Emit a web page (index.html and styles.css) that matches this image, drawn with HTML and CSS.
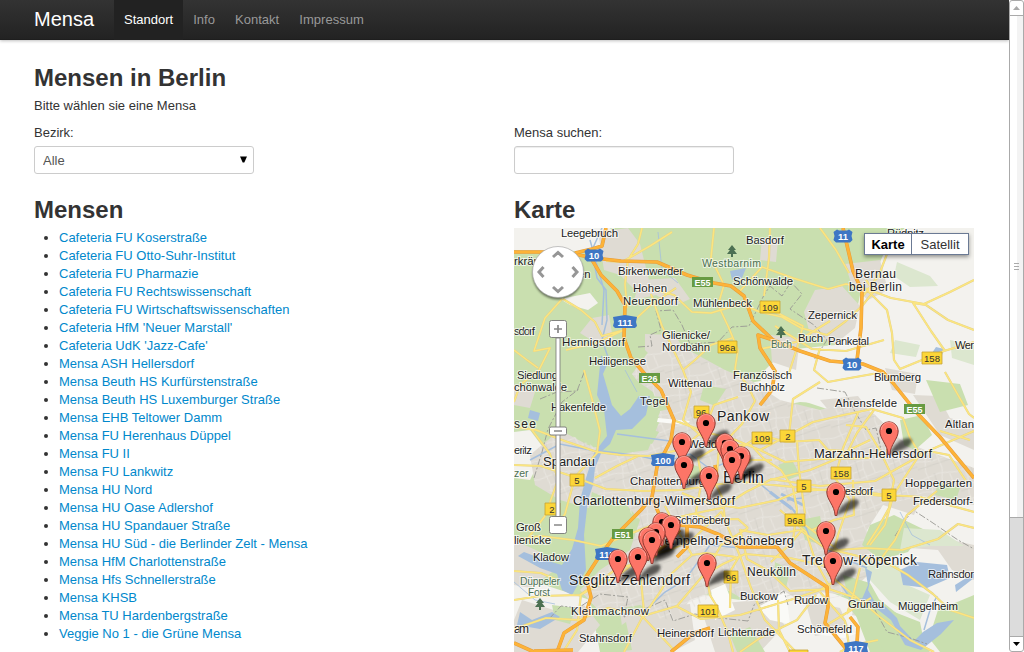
FILE: index.html
```html
<!DOCTYPE html>
<html lang="de">
<head>
<meta charset="utf-8">
<title>Mensa</title>
<link rel="stylesheet" href="styles.css">
</head>
<body>
<div class="page">
<nav class="navbar">
  <a class="brand">Mensa</a>
  <a class="nav-item active">Standort</a><a class="nav-item">Info</a><a class="nav-item">Kontakt</a><a class="nav-item">Impressum</a>
</nav>
<main class="container">
  <h1>Mensen in Berlin</h1>
  <p class="intro">Bitte wählen sie eine Mensa</p>
  <div class="row filters">
    <div class="col"><label for="bezirk">Bezirk:</label>
      <div class="select-wrap"><select id="bezirk" class="field"><option>Alle</option></select><svg class="caret" width="7" height="7"><path d="M0 0.5H7L4.3 6.5H2.7Z"/></svg></div></div>
    <div class="col"><label for="suche">Mensa suchen:</label><input id="suche" class="field" type="text"></div>
  </div>
  <div class="row">
    <section class="col">
      <h2>Mensen</h2>
      <ul class="list">
        <li><a>Cafeteria FU Koserstraße</a></li>
        <li><a>Cafeteria FU Otto-Suhr-Institut</a></li>
        <li><a>Cafeteria FU Pharmazie</a></li>
        <li><a>Cafeteria FU Rechtswissenschaft</a></li>
        <li><a>Cafeteria FU Wirtschaftswissenschaften</a></li>
        <li><a>Cafeteria HfM 'Neuer Marstall'</a></li>
        <li><a>Cafeteria UdK 'Jazz-Cafe'</a></li>
        <li><a>Mensa ASH Hellersdorf</a></li>
        <li><a>Mensa Beuth HS Kurfürstenstraße</a></li>
        <li><a>Mensa Beuth HS Luxemburger Straße</a></li>
        <li><a>Mensa EHB Teltower Damm</a></li>
        <li><a>Mensa FU Herenhaus Düppel</a></li>
        <li><a>Mensa FU II</a></li>
        <li><a>Mensa FU Lankwitz</a></li>
        <li><a>Mensa HU Nord</a></li>
        <li><a>Mensa HU Oase Adlershof</a></li>
        <li><a>Mensa HU Spandauer Straße</a></li>
        <li><a>Mensa HU Süd - die Berlinder Zelt - Mensa</a></li>
        <li><a>Mensa HfM Charlottenstraße</a></li>
        <li><a>Mensa Hfs Schnellerstraße</a></li>
        <li><a>Mensa KHSB</a></li>
        <li><a>Mensa TU Hardenbergstraße</a></li>
        <li><a>Veggie No 1 - die Grüne Mensa</a></li>
      </ul>
    </section>
    <section class="col">
      <h2>Karte</h2>
      <div class="map">
<svg class="map-canvas" width="460" height="424" viewBox="514 228 460 424">
  <defs>
    <pattern id="streets" width="37" height="31" patternUnits="userSpaceOnUse" patternTransform="rotate(-14)">
      <path d="M0 7L20 4L37 7M0 19L15 22L37 19M7 0L10 15L7 31M24 0L21 12L24 31M10 15L22 13M30 7L32 19" fill="none" stroke="#e8e5df" stroke-width="1"/>
      <path d="M0 27L37 24M15 3L16 22" fill="none" stroke="#cbc8c1" stroke-width=".5"/>
    </pattern>
    <filter id="blur" x="-30%" y="-30%" width="160%" height="160%"><feGaussianBlur stdDeviation="1.5"/></filter>
    <filter id="soft" x="-30%" y="-30%" width="160%" height="160%"><feGaussianBlur stdDeviation="1.3"/></filter>
    <g id="shadow"><path d="M0 24C3 16 8 11 15 8C22 6 25 9 21 14C17 19 6 20 0 24Z" fill="#000" opacity=".6" filter="url(#blur)"/></g>
    <g id="pin"><path d="M-.9 23.5C-1.5 13-9.2 8-9.2 0A9.2 9.2 0 1 1 9.2 0C9.2 8 1.5 13 .9 23.5Z" fill="#fd7567" stroke="#8e3931" stroke-width="1"/><path d="M-7.7-1A7.7 7.7 0 0 1 7.7-1" fill="none" stroke="#ffa79d" stroke-width=".8"/><circle r="3.1" fill="#000"/></g>
    <g id="tree" fill="#4c7052"><path d="M0-6L4-1H2L5 3H-5L-2-1H-4Z"/><path d="M-1 2H1V6H-1Z"/></g>
    <path id="shield" d="M-6-6.500L-4-5.500H4L6-6.500L9.500-4L8.500 0L9.500 4L7 6.500H-7L-9.500 4L-8.500 0L-9.500-4Z"/>
  </defs>
  <rect x="514" y="228" width="460" height="424" fill="#c9dfaf"/>

  <!-- open land -->
  <g fill="#f3f2ee">
    <path d="M514 228H610L622 242L612 256L594 252L575 251L514 250ZM560 299L590 293L598 303L588 310L570 305Z"/>
    <path d="M905 228H974V652H930L905 620L880 600L860 590L850 500L880 450L860 420L800 400L770 410L755 395L765 370L785 350L835 345L855 320L862 285L880 262L890 240Z"/>
    <path d="M514 432L530 430L545 450L530 480L514 478ZM514 575L560 590L590 600L600 652H514ZM670 590L740 600L800 580L850 600L870 652H640L650 620ZM642 610L670 615L668 645L642 640Z"/>
    <path d="M750 383L790 375L830 385L850 405L800 402L760 410Z"/>
  </g>
  <!-- built-up areas -->
  <g fill="#dfdbd3">
    <path d="M632 374L650 350L670 340L692 352L725 370L750 380L780 400L820 410L850 402L874 414L901 440L925 450L974 468L974 505L922 496L914 515L883 505L867 530L874 570L846 595L820 592L806 604L782 590L760 609L724 588L690 600L674 620L640 605L600 612L580 590L600 570L630 550L640 520L622 500L595 510L560 500L535 485L530 455L560 430L586 444L612 455L648 450L660 420L648 395Z"/>
    <path d="M598 232L628 228L640 244L650 284L636 291L620 275L604 270ZM640 280L675 278L690 299L674 306L656 295L634 300ZM592 318L609 315L613 340L599 345L580 333ZM645 334L675 335L690 360L660 365L645 350ZM514 385L535 392L530 408L514 405Z"/>
    <path d="M815 290L842 286L860 306L855 328L835 344L810 334L804 312ZM845 264L880 260L888 290L868 300L852 286ZM762 238L778 240L776 262L760 260ZM770 335L800 338L796 370L772 362Z"/>
    <path d="M514 540L540 552L555 570L530 588L514 585ZM522 600L560 612L584 605L600 625L578 652H514V620ZM620 610L690 604L695 640L672 652H625ZM700 605L760 600L785 625L760 652H715ZM805 600L840 608L850 630L815 636ZM855 600L880 602L875 620L852 615ZM905 530L974 545V580L952 570L938 550L910 548Z"/>
    <path d="M885 368L918 374L915 394L892 390ZM913 395L938 396L950 418L974 425V450L940 435ZM820 400L858 396L870 412L835 418Z"/>
  </g>
  <path d="M632 374L650 350L670 340L692 352L725 370L750 380L780 400L820 410L850 402L874 414L901 440L925 450L974 468V505L922 496L883 505L867 530L874 570L846 595L806 604L760 609L724 588L674 620L600 612L580 590L630 550L640 520L595 510L535 485L530 455L560 430L612 455L648 450L660 420L648 395Z" fill="url(#streets)"/>
  <!-- woods and parks -->
  <g fill="#c9dfaf">
    <path d="M585 400L628 375L653 392L660 412L651 434L620 440L604 430ZM592 492L622 505L638 520L620 555L593 562L584 536ZM646 396L665 397L669 409L652 413ZM704 385L726 389L715 406L700 400ZM778 465L792 460L800 475L788 480ZM800 520L820 516L826 546L805 540Z"/>
    <path d="M843 575L870 583L884 608L920 622L926 652H886L851 610ZM870 525L894 515L925 530L908 552L880 560L862 545ZM938 610L974 595V652H940L929 638ZM775 562L790 570L786 588L774 575ZM900 420L922 415L932 435L915 450L904 445ZM640 426L659 432L652 444L636 439ZM690 464L703 468L694 480L680 476Z"/>
    <path d="M926 380L960 384L968 405L940 412ZM938 482L960 488L956 500L935 495ZM615 630L626 622L632 650L613 652ZM552 605L576 608L570 624L555 620ZM730 635L750 627L765 652H737Z"/>
  </g>
  <g fill="#dce7cf"><path d="M858 560L898 564L905 584L930 595L920 620L890 602L870 580ZM904 528L940 530L964 546L930 546L900 550ZM897 262L930 276L938 286L910 287L894 276ZM895 340L920 345L916 357L890 353ZM950 340L974 345V365L952 358Z"/></g>
  <g fill="#fafaf7"><path d="M658 418L690 421L686 425L657 422ZM711 590L725 584L735 610L715 620ZM758 607L786 592L790 624L770 620ZM808 628L858 633L844 638L807 633Z"/></g>

  <!-- water -->
  <g fill="#a5bfdd">
    <path d="M601 355L607 365L603 374L608 391L612 405L621 416L630 409L639 396L650 396L646 415L632 429L616 430L610 444L602 451L595 468L593 485L588 500L584 535L586 570L572 595L562 590L557 574L540 568L518 556L524 552L545 560L562 565L572 549L578 528L580 500L586 478L594 453L607 436L604 410L597 395Z"/>
    <path d="M900 570L917 562L947 565L950 578L927 588L903 585Z"/>
    <path d="M865 568L872 572L868 590L876 604L886 607L897 618L900 626L914 641L923 632L937 623L954 620L941 634L921 650L905 645L891 620L877 609L862 599L868 585Z"/>
    <path d="M520 612L532 620L552 612L560 617L540 629L517 625ZM598 402L611 404L610 412L597 410ZM936 347L944 349L942 355L932 353ZM730 271L746 268L742 278L732 280ZM530 410L540 413L538 421L528 418ZM955 585L974 573V578L956 592Z"/>
  </g>
  <g fill="none" stroke="#a5bfdd" stroke-width="1.500">
    <path d="M602 228L592 250L597 278L606 290L607 320L602 340L609 360M590 240L604 290L602 325M600 452L560 444L530 460M602 451L640 456L665 462L690 454L710 469L730 461L749 475L770 492L790 506L803 520L810 538L838 556L867 568M617 434L670 441M787 500L802 498M790 506L806 528M640 616L665 592L685 580L710 545L740 548M924 630L930 610L937 596M870 600L850 598L838 580"/>
    <path d="M658 232L662 270L678 283M625 370L637 392M514 582L535 600L555 604M900 512L912 535L930 545" stroke-width=".8"/>
    <path d="M770 492L792 509M781 494L803 505" stroke-width="3"/>
  </g>

  <!-- city limits and railways -->
  <g fill="none" stroke="#999993" stroke-width=".9" stroke-dasharray="7 2 2 2"><path d="M638 347L652 346L650 335L661 330L656 311L673 310L682 325L690 344L718 342L732 327L749 326L764 295L770 286L782 296L791 282L802 294L790 309L814 325L827 340L814 360M817 388L845 392L854 410L866 430L876 428L881 450M534 478L542 452L548 429L562 402L579 389M540 399L557 392L577 391L585 370M549 619L561 606L578 608L600 594L628 597L624 617L647 608L665 600L673 621L695 614L710 617L748 621L754 605L770 600L784 591L788 605M895 536L904 522L913 510L930 521L958 540L974 549M875 610L887 632L910 638L927 644"/></g>

  <!-- main roads -->
  <g fill="none" stroke-linejoin="round">
    <g stroke="#e2d08a" stroke-width="2.200">
      <path id="r1" d="M563 299L581 310L595 322L602 336L624 330L640 315L652 304L676 288M562 299L545 318L534 351L550 348L539 370L520 385L514 402M514 350L527 360L538 368M642 228L638 244L628 260L625 284L627 308M672 232L650 246L622 262L606 261M714 228L711 258L724 285L718 305L728 326L738 350L735 369L748 386L755 401L742 424L719 448M654 290L674 295L692 312L711 313L741 304L760 312L782 317L801 328L827 335L846 321L862 306L874 291L866 280M651 294L662 326L683 370L691 392L683 420L706 440L719 448M683 370L695 360L711 345L732 338M624 330L596 343L566 350M739 292L762 267L793 278L828 289L846 284L867 289L891 298L924 304L950 292L974 280M770 228L769 258L764 296M820 228L836 250L849 273M890 246L879 275L863 296M867 290L887 310L892 333L894 360L900 369L944 351L974 342M945 351L931 331L913 303L926 305L948 320L974 330M775 326L812 349L846 351L884 340M764 306L803 326L797 348L789 373M820 348L814 370L828 382L850 378L884 372M760 349L796 342L830 321"/>
      <path id="r2" d="M514 427L536 430L562 440L597 452L621 455L648 456L680 450L704 430L714 405L738 397M514 465L541 466L574 477L606 489L644 491L680 490L714 485L742 481M532 430L550 454L558 480L545 516L528 538M598 452L575 477L565 514L554 530M584 370L592 399L600 431L597 453M595 478L617 466L638 456M673 420L709 433L733 439L760 450L785 462L820 459L870 458M514 540L540 536L573 540L601 546L632 533L663 521L692 514L721 508L746 492L770 480L810 470L846 455L857 433L874 410M682 493L707 503L739 508L778 500L800 491L836 489L880 494L920 497L974 512M696 512L702 479L698 458L719 446M725 522L723 499L716 485L719 448M725 445L751 445L764 459L781 470L793 488L797 510L793 540M739 472L751 460L772 460M741 448L760 435L787 442L819 440L828 450L847 451L870 440M742 482L794 487L853 493L883 496M770 479L820 486L875 481L930 450L974 431M760 450L789 435L813 422L839 416L872 409L903 418L910 438L920 454L890 500M789 435L793 399L820 382M797 440L799 470L805 514M858 413L843 448L835 478L850 500L838 535L830 567M846 425L866 427L879 449L894 480L889 508L878 528L867 545M740 530L768 535L800 530L825 548L858 556L884 561L908 575L933 594L950 610L974 618M800 521L838 550L866 548L902 550L938 539L958 524L974 528M870 545L885 525L892 500M945 372L958 395L969 414L974 418M928 451L949 455L966 481M940 431L970 440"/>
      <path id="r3" d="M514 600L540 596L580 595L620 574L641 558L670 550L692 540L721 512M581 594L577 630L563 652M580 595L615 570L657 556M514 629L546 618L579 620L608 608L643 616L677 606L706 572L721 545L748 528M643 617L660 592L670 575L692 555L706 553L736 557M705 568L710 595L716 605L728 633L733 652M706 574L723 564L745 554L790 558L830 567M643 616L624 652M643 617L674 650M644 612L641 580L632 561M676 606L701 619L740 615L790 600L820 590L835 581M692 555L675 526L665 506M721 511L740 556L751 588L765 620L796 652M740 529L747 559L767 570L790 591L829 589L856 598M778 600L779 630L790 652M816 595L797 620L760 638L740 652M830 588L815 560L806 532L780 510M827 573L860 600L880 617L910 640L934 652M820 592L845 621L850 652M825 626L871 598M860 568L854 592L847 614M880 560L895 540L907 515L937 491M812 530L834 520L854 515L853 480M771 562L790 544L803 529M694 514L711 520L738 519L748 528M514 571L541 573L555 579M840 652L853 645L878 640M730 608L731 570L740 555"/>
    </g>
    <g stroke="#fbe57f" stroke-width="1.500"><use href="#r1"/><use href="#r2"/><use href="#r3"/></g>
  </g>

  <!-- motorways -->
  <g fill="none" stroke-linejoin="round">
    <path class="motorway-edge" d="M514 252H564L594 258L621 261L657 262L687 275L714 283L731 286L744 296L753 321L773 340L800 351L830 361L863 364L883 372L893 383L917 413L940 437L974 478M591 258L601 275L617 291L625 305L624 338L631 358L644 373L661 390L674 420L671 440L657 467L652 497L641 510L614 537L597 560L586 577L591 597L584 620L564 633L557 652"/>
    <path class="motorway" d="M514 252H564L594 258L621 261L657 262L687 275L714 283L731 286L744 296L753 321L773 340L800 351L830 361L863 364L883 372L893 383L917 413L940 437L974 478M591 258L601 275L617 291L625 305L624 338L631 358L644 373L661 390L674 420L671 440L657 467L652 497L641 510L614 537L597 560L586 577L591 597L584 620L564 633L557 652"/>
    <path class="motorway-edge" d="M575 253L592 249L602 246L606 228M652 497L659 514L678 525L700 527L720 535L740 547L777 547L790 563L827 587L828 607L825 623L847 650M843 228L853 271L862 291L861 328L857 360M773 340L758 335L760 348L775 371L772 390L760 405M514 643L534 652M534 651L573 650M710 628L694 633L671 652M850 617L858 627L857 643M687 527L687 547L677 557M715 465L717 477M680 530L665 546L655 553"/>
    <path class="motorway" d="M575 253L592 249L602 246L606 228M652 497L659 514L678 525L700 527L720 535L740 547L777 547L790 563L827 587L828 607L825 623L847 650M843 228L853 271L862 291L861 328L857 360M773 340L758 335L760 348L775 371L772 390L760 405M514 643L534 652M534 651L573 650M710 628L694 633L671 652M850 617L858 627L857 643M687 527L687 547L677 557M715 465L717 477M680 530L665 546L655 553"/>
  </g>

  <!-- place names -->
  <g class="labels">
    <text x="561" y="237" textLength="57">Leegebruch</text><text x="746" y="244" textLength="38">Basdorf</text><text x="887" y="237" textLength="37">Rüdnitz</text>
    <text x="514" y="265">rkrän</text><text x="578" y="278">en</text><text x="618" y="275" textLength="65">Birkenwerder</text>
    <text x="702" y="267" textLength="59" class="park">Westbarnim</text><text x="733" y="285" textLength="60">Schönwalde</text>
    <text x="633" y="292" textLength="34">Hohen</text><text x="623" y="305" textLength="55">Neuendorf</text><text x="693" y="307" textLength="59">Mühlenbeck</text>
    <text x="855" y="278" textLength="41" class="mid">Bernau</text><text x="849" y="291" textLength="53" class="mid">bei Berlin</text>
    <text x="808" y="319" textLength="49">Zepernick</text><text x="798" y="342" textLength="25">Buch</text><text x="828" y="345" textLength="41">Panketal</text><text x="771" y="348" textLength="21" class="park">Buch</text>
    <text x="514" y="335" textLength="21">sdorf</text><text x="562" y="346" textLength="63">Hennigsdorf</text><text x="589" y="365" textLength="57">Heiligensee</text>
    <text x="662" y="339" textLength="48">Glienicke/</text><text x="662" y="351" textLength="48">Nordbahn</text><text x="955" y="349" textLength="19">Wer</text>
    <text x="517" y="379" textLength="41">Siedlung</text><text x="514" y="391" textLength="53">chönwalde</text><text x="668" y="387" textLength="44">Wittenau</text><text x="733" y="379" textLength="59">Französisch</text><text x="740" y="391" textLength="45">Buchholz</text><text x="874" y="381" textLength="47">Blumberg</text>
    <text x="640" y="405" textLength="28">Tegel</text><text x="551" y="411" textLength="55">Hakenfelde</text><text x="835" y="407" textLength="62">Ahrensfelde</text><text x="945" y="428" textLength="29">Altlan</text>
    <text x="717" y="421" textLength="52" class="big wide">Pankow</text><text x="514" y="428" textLength="22" class="mid">see</text><text x="514" y="454" textLength="18">eritz</text><text x="543" y="466" textLength="52" class="big">Spandau</text>
    <text x="688" y="448" textLength="44">Wedding</text><text x="630" y="485" textLength="75">Charlottenburg</text><text x="573" y="505" textLength="162" class="big">Charlottenburg-Wilmersdorf</text><text x="723" y="483" textLength="41" class="city">Berlin</text>
    <text x="814" y="458" textLength="118" class="big">Marzahn-Hellersdorf</text><text x="836" y="495" textLength="37">Biesdorf</text><text x="905" y="487" textLength="67">Hoppegarten</text><text x="913" y="505" textLength="60">Fredersdorf-</text>
    <text x="514" y="477" class="park">zer</text><text x="516" y="531" textLength="25">Groß</text><text x="514" y="544" textLength="37">lienicke</text><text x="533" y="561" textLength="36">Kladow</text><text x="520" y="585" textLength="40" class="park">Düppeler</text><text x="528" y="596" textLength="22" class="park">Forst</text>
    <text x="674" y="524" textLength="56">Schöneberg</text><text x="658" y="545" textLength="136" class="big">Tempelhof-Schöneberg</text><text x="569" y="585" textLength="121" class="big wide">Steglitz-Zehlendorf</text><text x="747" y="576" textLength="49" class="mid">Neukölln</text>
    <text x="571" y="615" textLength="78">Kleinmachnow</text><text x="514" y="633" textLength="15" class="mid">am</text><text x="579" y="642" textLength="53">Stahnsdorf</text><text x="657" y="637" textLength="57">Heinersdorf</text><text x="718" y="636" textLength="57">Lichtenrade</text><text x="740" y="600" textLength="38">Buckow</text><text x="794" y="604" textLength="34">Rudow</text><text x="797" y="633" textLength="55">Schönefeld</text><text x="848" y="608" textLength="36">Grünau</text><text x="898" y="610" textLength="60">Müggelheim</text><text x="928" y="578" textLength="46">Rahnsdor</text><text x="802" y="565" textLength="115" class="big wide">Treptow-Köpenick</text>
  </g>
  <g><use href="#tree" x="732" y="251"/><use href="#tree" x="781" y="332"/><use href="#tree" x="540" y="604"/></g>

  <!-- road numbers -->
  <g class="auto">
    <use href="#shield" x="594" y="255"/><use href="#shield" x="843" y="236"/><use href="#shield" x="852" y="364"/>
    <path d="M613 317L625 315L637 317L636 322L637 326L635 328H615L613 326L614 322ZM651 455L663 453L675 455L674 460L675 464L673 466H653L651 464L652 460ZM595 549L607 547L619 549L618 554L619 558L617 560H597L595 558L596 554ZM844 643L856 641L868 643L867 648L868 652H844L845 648Z"/>
    <text x="594" y="259">10</text><text x="843" y="240">11</text><text x="852" y="368">10</text><text x="625" y="326">111</text><text x="663" y="464">100</text><text x="607" y="558">115</text><text x="856" y="651.500">117</text>
  </g>
  <g class="euro">
    <path d="M692 277H713V287H692ZM639 373H660V383H639ZM904 404H925V414H904ZM612 529H633V539H612Z"/>
    <text x="702.500" y="285.500">E55</text><text x="649.500" y="381.500">E26</text><text x="914.500" y="412.500">E55</text><text x="622.500" y="537.500">E51</text>
  </g>
  <g class="bund">
    <path d="M760 301H780V313H760ZM718 341H737V353H718ZM922 352H942V364H922ZM694 406H709V418H694ZM752 432H772V444H752ZM780 430H795V442H780ZM570 474H584V486H570ZM831 467H851V479H831ZM797 480H811V492H797ZM882 489H896V501H882ZM785 514H805V526H785ZM545 503H560V515H545ZM724 571H738V583H724ZM698 605H718V617H698ZM789 650H808V662H789Z"/>
    <text x="770" y="311">109</text><text x="727.500" y="351">96a</text><text x="932" y="362">158</text><text x="701" y="416">96</text><text x="762" y="442">109</text><text x="788" y="440">2</text><text x="577" y="484">5</text><text x="841" y="477">158</text><text x="804" y="490">5</text><text x="889" y="499">5</text><text x="795" y="524">96a</text><text x="552" y="513">2</text><text x="731" y="581">96</text><text x="708" y="615">101</text>
  </g>

  <!-- canteens -->
  <g><use href="#shadow" x="706" y="423"/><use href="#shadow" x="682" y="442"/><use href="#shadow" x="684" y="465"/><use href="#shadow" x="709" y="476"/><use href="#shadow" x="725" y="443"/><use href="#shadow" x="730" y="449"/><use href="#shadow" x="741" y="456"/><use href="#shadow" x="732" y="460"/><use href="#shadow" x="889" y="431"/><use href="#shadow" x="836" y="492"/><use href="#shadow" x="826" y="531"/><use href="#shadow" x="833" y="561"/><use href="#shadow" x="662" y="522"/><use href="#shadow" x="671" y="525"/><use href="#shadow" x="656" y="533"/><use href="#shadow" x="649" y="537"/><use href="#shadow" x="652" y="540"/><use href="#shadow" x="618" y="559"/><use href="#shadow" x="638" y="557"/><use href="#shadow" x="707" y="563"/></g>
  <g><use href="#pin" x="706" y="423"/><use href="#pin" x="889" y="431"/><use href="#pin" x="682" y="442"/><use href="#pin" x="725" y="443"/><use href="#pin" x="730" y="449"/><use href="#pin" x="741" y="456"/><use href="#pin" x="732" y="460"/><use href="#pin" x="684" y="465"/><use href="#pin" x="709" y="476"/><use href="#pin" x="836" y="492"/><use href="#pin" x="662" y="522"/><use href="#pin" x="671" y="525"/><use href="#pin" x="826" y="531"/><use href="#pin" x="656" y="532"/><use href="#pin" x="648" y="537"/><use href="#pin" x="652" y="540"/><use href="#pin" x="638" y="557"/><use href="#pin" x="618" y="559"/><use href="#pin" x="833" y="561"/><use href="#pin" x="707" y="563"/></g>

  <!-- pan and zoom controls -->
  <circle cx="558" cy="274" r="25.500" fill="#000" opacity=".5" filter="url(#soft)"/>
  <circle cx="558" cy="272" r="25.500" fill="#fff" stroke="#aaa" stroke-width=".7"/>
  <path d="M553 257L558 252.500L563 257M553 287L558 291.500L563 287M543.500 267L539 272L543.500 277M572.500 267L577 272L572.500 277" fill="none" stroke="#969696" stroke-width="3"/>
  <rect x="556" y="338" width="4" height="179" fill="#fff" stroke="#777" stroke-width=".8"/>
  <g fill="#fff" stroke="#777" stroke-width=".9"><rect x="549.500" y="320.500" width="17" height="17" rx="2"/><rect x="549.500" y="516.500" width="17" height="17" rx="2"/><rect x="549.500" y="427" width="17" height="8" rx="1.500"/></g>
  <path d="M554 329H562M558 325V333M554 525H562M554 431H562" stroke="#888" stroke-width="1.700"/>
</svg>
        <div class="map-type"><b>Karte</b><span>Satellit</span></div>
      </div>
    </section>
  </div>
</main>
</div>
<div class="scrollbar"><div class="sb-button"><svg width="7" height="4"><path d="M3.500 0L7 4H0Z" fill="#aaa"/></svg></div><div class="sb-thumb"><i></i><i></i><i></i></div><div class="sb-track"></div><div class="sb-button"><svg width="7" height="4"><path d="M0 0H7L3.500 4Z"/></svg></div></div>
</body>
</html>
```

FILE: styles.css
```css
* { box-sizing: border-box; }
body { margin: 0; height: 652px; overflow: hidden; display: flex; background: #fff; color: #333; font: 13px/18px "Liberation Sans", Arial, sans-serif; }
.page { flex: 1; height: 652px; overflow: hidden; }
.navbar { height: 40px; padding-left: 34px; display: flex; background: linear-gradient(#333, #222); box-shadow: 0 1px 3px rgba(0,0,0,.25), inset 0 -1px 0 rgba(0,0,0,.1); color: #999; }
.brand { width: 80px; font-size: 20px; line-height: 20px; padding-top: 9px; color: #fff; }
.nav-item { padding: 10px; line-height: 19px; height: 40px; letter-spacing: .03px; }
.nav-item.active { background: #222; color: #fff; letter-spacing: 0; }
.container { padding: 20px 0 0 34px; }
h1, h2 { margin: 0; font-size: 24px; line-height: 36px; font-weight: bold; }
h2 { line-height: 37px; }
.intro { margin: 1px 0 9px; }
.row { display: flex; gap: 20px; }
.col { width: 460px; }
.filters { height: 67px; }
label { display: block; margin-bottom: 4px; }
.select-wrap { position: relative; width: 220px; }
.field { display: block; width: 220px; height: 28px; margin: 0; padding: 5px 8px 3px; border: 1px solid #ccc; border-radius: 3px; background: #fff; color: #555; font: inherit; appearance: none; box-shadow: inset 0 1px 1px rgba(0,0,0,.075); }
select.field { box-shadow: none; }
.caret { position: absolute; right: 7px; top: 10px; }
.list { margin: 0 0 9px 25px; padding: 1px 0 0; }
.list a { color: #08c; }
.map { position: relative; width: 460px; height: 424px; }
.map-canvas { display: block; font-family: "Liberation Sans", Arial, sans-serif; }
.map-type { position: absolute; top: 5px; right: 5px; width: 105px; height: 22px; display: flex; background: #fff; border: 1px solid #6b7a94; box-shadow: 0 2px 4px rgba(0,0,0,.4); line-height: 21px; text-align: center; }
.map-type b { width: 47px; color: #000; border-right: 1px solid #6b7a94; }
.map-type span { flex: 1; }
.labels { font-size: 11.400px; fill: #222; stroke: #fff; stroke-opacity: .65; stroke-width: 2px; paint-order: stroke; }
.labels .mid { font-size: 12px; }
.labels .big { font-size: 13px; }
.labels .wide { font-size: 14px; }
.labels .city { font-size: 16px; }
.labels .park { font-size: 10.500px; fill: #4c7052; }
.motorway-edge { stroke: #e49b3c; stroke-width: 3.600px; }
.motorway { stroke: #fdb338; stroke-width: 2.700px; }
.auto, .euro, .bund { text-anchor: middle; font-size: 9.500px; }
.auto { fill: #3e76c4; font-weight: bold; }
.auto text, .euro text { fill: #fff; }
.euro { fill: #679b43; font-weight: bold; font-size: 9px; }
.bund path { fill: #fcd638; stroke: #c5a236; stroke-width: .8px; }
.bund text { fill: #333; }
.scrollbar { width: 15px; height: 652px; display: flex; flex-direction: column; border: 1px solid #aaa; border-radius: 3px; background: #fff; }
.sb-button { height: 14px; flex: none; display: flex; align-items: center; justify-content: center; }
.sb-thumb { height: 503px; display: flex; flex-direction: column; align-items: center; justify-content: center; gap: 2px; background: linear-gradient(90deg, #fff 55%, #f3f3f3 55%); border: solid #aaa; border-width: 1px 0; }
.sb-thumb i { width: 5px; height: 1px; background: #aaa; }
.sb-track { flex: 1; background: #dcdcdc; border-bottom: 1px solid #aaa; }
```
